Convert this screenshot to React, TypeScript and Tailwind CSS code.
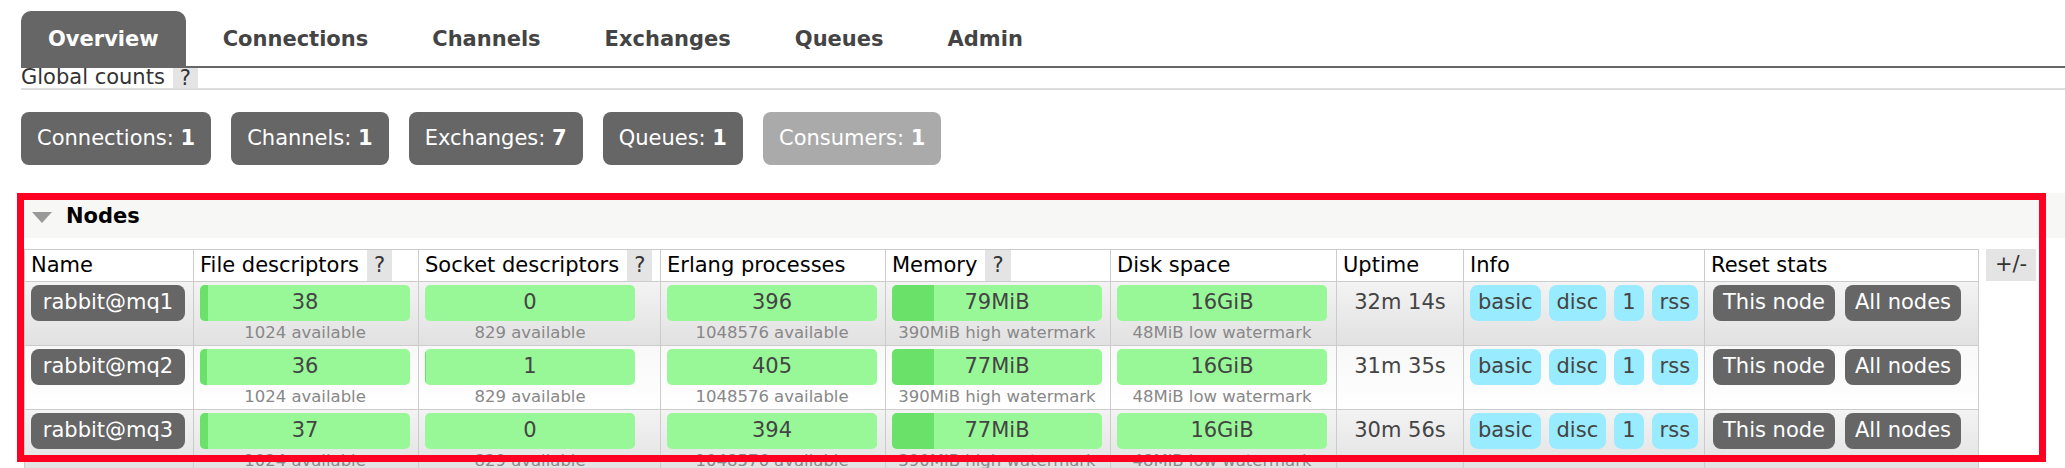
import React from 'react';

type Node = {
  name: string;
  fd: number;
  sockets: number;
  procs: number;
  mem: string;
  memPct: number;
  uptime: string;
};

const nodes: Node[] = [
  { name: 'rabbit@mq1', fd: 38, sockets: 0, procs: 396, mem: '79MiB', memPct: 20, uptime: '32m 14s' },
  { name: 'rabbit@mq2', fd: 36, sockets: 1, procs: 405, mem: '77MiB', memPct: 20, uptime: '31m 35s' },
  { name: 'rabbit@mq3', fd: 37, sockets: 0, procs: 394, mem: '77MiB', memPct: 20, uptime: '30m 56s' },
];

const tabs = ['Overview', 'Connections', 'Channels', 'Exchanges', 'Queues', 'Admin'];

const counts = [
  { label: 'Connections', value: 1 },
  { label: 'Channels', value: 1 },
  { label: 'Exchanges', value: 7 },
  { label: 'Queues', value: 1 },
];

// column widths of the nodes table
const cols = [169, 225, 242, 225, 225, 226, 127, 241, 274];

const Help: React.FC = () => (
  <span className="inline-flex items-center self-stretch bg-[#e4e4e4] px-[7px] text-[#333]">?</span>
);

const Bar: React.FC<{ value: string | number; pct: number; sub: string }> = ({ value, pct, sub }) => (
  <div className="flex w-[210px] flex-col items-center">
    <div className="relative h-[36px] w-[210px] overflow-hidden rounded-[5px] bg-[#98f898]">
      {pct > 0 && <div className="absolute inset-y-0 left-0 bg-[#6ae26a]" style={{ width: `${pct}%` }} />}
      <div className="relative flex h-full items-center justify-center text-[#444]">{value}</div>
    </div>
    <div className="mt-[1px] text-[16.5px] leading-[22px] text-[#888]">{sub}</div>
  </div>
);

const HeadCell: React.FC<{ label: string; help?: boolean }> = ({ label, help }) => (
  <th className="border border-[#ccc] px-[6px] py-0 font-normal">
    <div className="flex h-[31px] items-stretch">
      <span className="mr-[8px] self-center whitespace-nowrap">{label}</span>
      {help && <Help />}
    </div>
  </th>
);

export default function App() {
  return (
    <div className="relative h-[468px] w-[2065px] overflow-hidden bg-white font-['DejaVu_Sans',Verdana,sans-serif] text-[21px] text-black">
      {/* nav tabs */}
      <div className="pl-[21px] pt-[11px]">
        <div className="flex h-[57px] border-b-2 border-[#666]">
          {tabs.map((t, i) => (
            <div
              key={t}
              className={`mr-[10px] flex h-[55px] items-center px-[27px] pt-[3px] text-[21px] font-bold ${
                i === 0 ? 'rounded-t-[10px] bg-[#666] text-white' : 'text-[#444]'
              }`}
            >
              {t}
            </div>
          ))}
        </div>

        {/* global counts */}
        <div className="flex h-[22px] items-stretch border-b-2 border-[#ddd] leading-[18px] text-[#333]">
          <span className="mr-[8px]">Global counts</span>
          <Help />
        </div>

        <div className="mt-[22px] flex gap-[20px]">
          {counts.map((c) => (
            <div key={c.label} className="flex h-[53px] items-center rounded-[8px] bg-[#666] px-[16px] text-white">
              {c.label}:&nbsp;<b>{c.value}</b>
            </div>
          ))}
          <div className="flex h-[53px] items-center rounded-[8px] bg-[#aaa] px-[16px] text-white">
            Consumers:&nbsp;<b>1</b>
          </div>
        </div>
      </div>

      {/* nodes section */}
      <div className="mt-[28px] pl-[21px]">
        <div className="flex h-[45px] items-center bg-[#f7f7f5] pl-[11px] pt-[3px]">
          <svg width="20" height="11" viewBox="0 0 20 11" className="mr-[14px]">
            <polygon points="0,0 20,0 10,11" fill="#999" />
          </svg>
          <span className="font-bold">Nodes</span>
        </div>

        <div className="mt-[11px] flex items-start pl-[3px]">
          <table className="w-[1954px] table-fixed border-collapse text-left">
            <colgroup>
              {cols.map((w, i) => (
                <col key={i} style={{ width: w }} />
              ))}
            </colgroup>
            <thead>
              <tr className="h-[32px] bg-white">
                <HeadCell label="Name" />
                <HeadCell label="File descriptors" help />
                <HeadCell label="Socket descriptors" help />
                <HeadCell label="Erlang processes" />
                <HeadCell label="Memory" help />
                <HeadCell label="Disk space" />
                <HeadCell label="Uptime" />
                <HeadCell label="Info" />
                <HeadCell label="Reset stats" />
              </tr>
            </thead>
            <tbody>
              {nodes.map((n, i) => (
                <tr
                  key={n.name}
                  className={`h-[64px] bg-gradient-to-b ${
                    i % 2 === 0 ? 'from-[#f3f3f3] to-[#e1e1e1]' : 'from-[#f8f8f8] to-white'
                  }`}
                >
                  <td className="border border-[#ccc] px-[6px] pt-[3px] align-top">
                    <div className="flex h-[36px] w-[154px] items-center justify-center rounded-[8px] bg-[#666] text-white">
                      {n.name}
                    </div>
                  </td>
                  <td className="border border-[#ccc] px-[6px] pt-[3px] align-top">
                    <Bar value={n.fd} pct={(n.fd / 1024) * 100} sub="1024 available" />
                  </td>
                  <td className="border border-[#ccc] px-[6px] pt-[3px] align-top">
                    <Bar value={n.sockets} pct={(n.sockets / 829) * 100} sub="829 available" />
                  </td>
                  <td className="border border-[#ccc] px-[6px] pt-[3px] align-top">
                    <Bar value={n.procs} pct={0} sub="1048576 available" />
                  </td>
                  <td className="border border-[#ccc] px-[6px] pt-[3px] align-top">
                    <Bar value={n.mem} pct={n.memPct} sub="390MiB high watermark" />
                  </td>
                  <td className="border border-[#ccc] px-[6px] pt-[3px] align-top">
                    <Bar value="16GiB" pct={0} sub="48MiB low watermark" />
                  </td>
                  <td className="border border-[#ccc] px-[6px] pt-[3px] align-top">
                    <div className="flex h-[36px] items-center justify-center text-[#444]">{n.uptime}</div>
                  </td>
                  <td className="border border-[#ccc] px-[6px] pt-[3px] align-top">
                    <div className="flex gap-[8px] text-[#444]">
                      {['basic', 'disc', '1', 'rss'].map((b) => (
                        <span key={b} className="flex h-[36px] items-center rounded-[8px] bg-[#99ebff] px-[8px]">
                          {b}
                        </span>
                      ))}
                    </div>
                  </td>
                  <td className="border border-[#ccc] px-[8px] pt-[3px] align-top">
                    <div className="flex gap-[10px] text-white">
                      <span className="flex h-[36px] items-center rounded-[8px] bg-[#666] px-[10px]">This node</span>
                      <span className="flex h-[36px] items-center rounded-[8px] bg-[#666] px-[10px]">All nodes</span>
                    </div>
                  </td>
                </tr>
              ))}
            </tbody>
          </table>
          <div className="ml-[7px] flex h-[32px] w-[50px] items-center justify-center bg-[#e4e4e4] text-[#333]">+/-</div>
        </div>
      </div>

      {/* annotation frame */}
      <div className="pointer-events-none absolute left-[17px] top-[193px] h-[269px] w-[2029px] border-[7px] border-[#ff0022]" />
    </div>
  );
}
